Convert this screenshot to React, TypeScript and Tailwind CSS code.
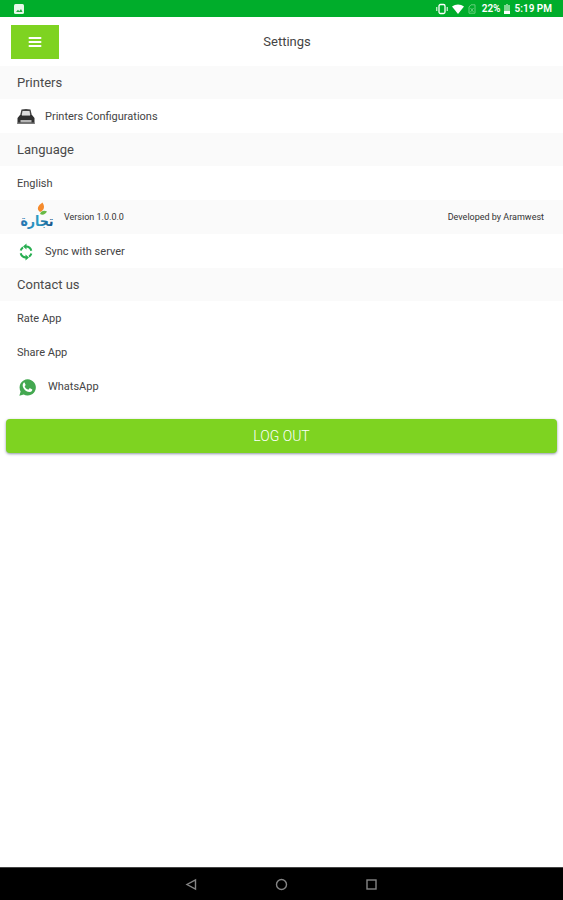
import type { ReactNode } from 'react';

function SectionTitle({ children }: { children: ReactNode }) {
  return (
    <h2 className="flex h-[33px] items-center bg-[#fafafa] px-[17px] text-[13px] text-[#4a4a4a]">{children}</h2>
  );
}

function Row({ icon, children }: { icon?: ReactNode; children: ReactNode }) {
  return (
    <button type="button" className="flex h-[34px] w-full items-center gap-2.5 px-[17px] pt-0.5 text-left text-[11px] text-[#444]">
      {icon}
      <span>{children}</span>
    </button>
  );
}

function StatusBar() {
  return (
    <div className="flex h-[17px] items-center justify-between bg-[#00ad2b] pl-3.5 pr-[11px] text-white">
      <svg className="h-[10px] w-[10px]" viewBox="0 0 10 10" aria-hidden="true">
        <rect width="10" height="10" rx="1.5" fill="#e6f8e9" />
        <path d="M2 8l2-2.2 1.3 1.4L7 5l1.5 3z" fill="#27a844" />
      </svg>
      <div className="flex items-center text-[10px] font-semibold">
        <svg className="mr-1 h-3 w-3" viewBox="0 0 12 12" fill="none" stroke="#fff" aria-hidden="true">
          <rect x="3" y="1.5" width="6" height="9" rx="1.5" strokeWidth="1.3" />
          <path d="M.8 4v4M11.2 4v4" />
        </svg>
        <svg className="mr-1 h-3 w-3" viewBox="0 0 12 12" aria-hidden="true">
          <path d="M0 3.5C3.5.8 8.5.8 12 3.5L6 11z" fill="#fff" />
        </svg>
        <svg className="mr-1.5 h-2.5 w-2" viewBox="0 0 8 10" fill="none" stroke="#66cf7c" aria-hidden="true">
          <path d="M3 .8h4v8.4H1V3zM2.5 4l3 4M5.5 4l-3 4" />
        </svg>
        <span>22%</span>
        <svg className="mx-1 h-2.5 w-1.5" viewBox="0 0 6 10" aria-hidden="true">
          <path d="M2 0h2v1h2v9H0V1h2z" fill="#7fd892" />
          <path d="M0 7h6v3H0z" fill="#fff" />
        </svg>
        <span>5:19 PM</span>
      </div>
    </div>
  );
}

function PrinterIcon() {
  return (
    <svg className="h-[18px] w-[18px]" viewBox="0 0 18 18" aria-hidden="true">
      <path d="M4.5 1.5Q9 .5 13.500 1.500L15 8H3z" fill="#444" />
      <path d="M5.5 3h7l.8 4.500H4.700z" fill="#dedede" />
      <path d="M3 7h1.500l.5 1h8l.5-1H15l2.500 3v6H.5v-6z" fill="#303030" />
      <path d="M3.500 12h11v2.500h-11z" fill="#b5b5b5" />
      <path d="M.5 14.500h17V16H.5z" fill="#777" />
    </svg>
  );
}

function SyncIcon() {
  return (
    <svg className="h-[18px] w-[18px]" viewBox="0 0 18 18" fill="none" stroke="#27ae50" strokeWidth="2" aria-hidden="true">
      <path d="M9 3.5a5.5 5.5 0 0 1 5.3 4.2M14.300 10.500a5.500 5.500 0 0 1-2.300 3.200M9 14.500a5.500 5.500 0 0 1-5.300-4.200M3.700 7.500A5.500 5.500 0 0 1 6 4.300" />
      <path d="M9.5.5v6L6 3.500zM8.500 11.500v6l3.500-3z" fill="#27ae50" stroke="none" />
    </svg>
  );
}

function WhatsAppIcon() {
  return (
    <svg className="mx-0.5 h-[17px] w-[17px]" viewBox="0 0 24 24" aria-hidden="true">
      <path d="M12.2.5a11.4 11.4 0 0 0-9.9 17L.5 23.5l6.2-1.7A11.4 11.4 0 1 0 12.2.5z" fill="#43a850" />
      <path
        d="M8.1 5.5c-.4-.6-.9-.6-1.5-.1-4 3.7.7 13.2 8.9 13.1 1.9-.2 3.3-1.4 3.3-3.2 0-.4-.1-.6-.5-.8l-2.7-1.3c-.4-.2-.7-.1-1 .3l-1.1 1.3c-.3.3-.6.3-1 .1-2.1-.9-3.4-2.3-4.3-4.1-.2-.4-.1-.7.2-1l.8-.9c.2-.3.2-.6.1-.9z"
        fill="#fff"
      />
    </svg>
  );
}

function BrandLogo() {
  return (
    <svg className="h-[34px] w-[34px] shrink-0" viewBox="0 0 34 34" role="img" aria-label="تجارة">
      <defs>
        <linearGradient id="brand" x1="0" y1="0" x2="1" y2="0">
          <stop offset="0" stopColor="#256eae" />
          <stop offset=".5" stopColor="#2a9bc4" />
          <stop offset="1" stopColor="#194f86" />
        </linearGradient>
      </defs>
      <text
        x="17"
        y="25"
        textAnchor="middle"
        direction="rtl"
        fill="url(#brand)"
        className="font-['DejaVu_Sans_Condensed','DejaVu_Sans',sans-serif] text-[14px] font-bold"
      >
        تجارة
      </text>
      <path d="M20 11c-4-3-2-6.5 2.5-9.5 2.5 4 2 7.5-2.5 9.5z" fill="#f58a2c" />
      <path d="M20 13c1-3 4-4 7-2.5-1.5 3-4.5 4-7 2.5z" fill="#68b944" />
    </svg>
  );
}

function NavigationBar() {
  return (
    <nav className="flex h-[33px] items-center justify-center gap-[77px] border-t border-[#444] bg-black text-[#858585]">
      <button type="button" aria-label="Back">
        <svg className="h-[13px] w-[13px]" viewBox="0 0 13 13" fill="none" stroke="currentColor" strokeWidth="1.4">
          <path d="M10.5 2v9L2 6.5z" />
        </svg>
      </button>
      <button type="button" aria-label="Home">
        <svg className="h-[13px] w-[13px]" viewBox="0 0 13 13" fill="none" stroke="currentColor" strokeWidth="1.4">
          <circle cx="6.5" cy="6.5" r="5" />
        </svg>
      </button>
      <button type="button" aria-label="Recent apps">
        <svg className="h-[13px] w-[13px]" viewBox="0 0 13 13" fill="none" stroke="currentColor" strokeWidth="1.4">
          <rect x="2" y="2" width="9" height="9" />
        </svg>
      </button>
    </nav>
  );
}

export default function App() {
  return (
    <div className="flex min-h-screen flex-col bg-white font-[Roboto,sans-serif]">
      <StatusBar />

      <header className="flex h-[49px] items-center pl-[11px] pr-12">
        <button type="button" aria-label="Menu" className="flex h-[34px] w-12 items-center justify-center bg-[#7ed321]">
          <svg className="h-3 w-3.5" viewBox="0 0 14 12" stroke="#fff" strokeWidth="2" strokeLinecap="round" aria-hidden="true">
            <path d="M1.5 2h11M1.5 6h11M1.5 10h11" />
          </svg>
        </button>
        <h1 className="flex-1 text-center text-[13px] text-[#444]">Settings</h1>
      </header>

      <main className="flex-1">
        <SectionTitle>Printers</SectionTitle>
        <Row icon={<PrinterIcon />}>Printers Configurations</Row>

        <SectionTitle>Language</SectionTitle>
        <Row>English</Row>

        <div className="flex h-[34px] items-center gap-2.5 bg-[#fafafa] pl-5 pr-[19px] pt-0.5 text-[9px] text-[#333]">
          <BrandLogo />
          <span>Version 1.0.0.0</span>
          <span className="ml-auto">Developed by Aramwest</span>
        </div>
        <Row icon={<SyncIcon />}>Sync with server</Row>

        <SectionTitle>Contact us</SectionTitle>
        <Row>Rate App</Row>
        <Row>Share App</Row>
        <Row icon={<WhatsAppIcon />}>WhatsApp</Row>

        <div className="px-1.5 pt-4">
          <button
            type="button"
            className="h-[34px] w-full rounded-sm bg-[#7ed321] text-[14px] font-light text-white shadow-sm shadow-gray-400"
          >
            LOG OUT
          </button>
        </div>
      </main>

      <NavigationBar />
    </div>
  );
}
